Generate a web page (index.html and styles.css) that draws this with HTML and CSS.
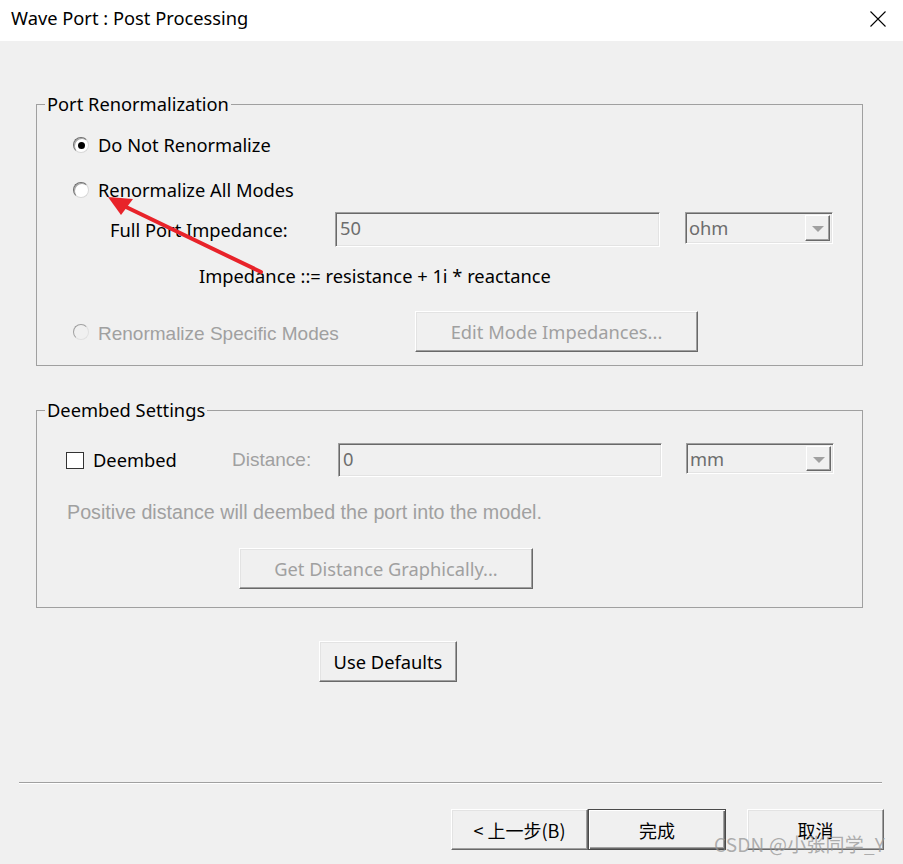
FILE: index.html
```html
<!DOCTYPE html>
<html>
<head>
<meta charset="utf-8">
<link rel="stylesheet" href="styles.css">
</head>
<body>
<div class="titlebar">
  <span class="title">Wave Port : Post Processing</span>
  <svg class="close" width="16" height="16" viewBox="0 0 16 16"><path d="M0.5 0.5 L15.5 15.5 M15.5 0.5 L0.5 15.5" stroke="#000" stroke-width="1.1" fill="none"/></svg>
</div>
<div class="content">
  <fieldset class="group g1">
    <legend>Port Renormalization</legend>
    <div class="row r1"><span class="radio checked"></span><span class="lbl">Do Not Renormalize</span></div>
    <div class="row r2"><span class="radio"></span><span class="lbl">Renormalize All Modes</span></div>
    <div class="row r3">
      <span class="fpi">Full Port Impedance:</span>
      <div class="input in50"><span class="val">50</span></div>
      <div class="select"><span class="val">ohm</span><span class="arrowbtn"><span class="tri"></span></span></div>
    </div>
    <div class="row r4"><span>Impedance ::= resistance + 1i * reactance</span></div>
    <div class="row r5">
      <span class="radio disabled"></span><span class="lbl dis specific">Renormalize Specific Modes</span>
      <div class="btn dis editbtn">Edit Mode Impedances...</div>
    </div>
  </fieldset>

  <fieldset class="group g2">
    <legend>Deembed Settings</legend>
    <div class="row d1">
      <div class="chkwrap"><span class="check"></span><span class="lbl">Deembed</span></div>
      <span class="dis distlbl">Distance:</span>
      <div class="input in0"><span class="val">0</span></div>
      <div class="select"><span class="val">mm</span><span class="arrowbtn"><span class="tri"></span></span></div>
    </div>
    <div class="row d2"><span class="dis">Positive distance will deembed the port into the model.</span></div>
    <div class="row d3"><div class="btn dis getbtn">Get Distance Graphically...</div></div>
  </fieldset>

  <div class="btn defaults">Use Defaults</div>

  <div class="separator"></div>

  <div class="footer">
    <div class="btn fbtn">&lt; 上一步(B)</div>
    <div class="btn fbtn default">完成</div>
    <div class="btn fbtn cancel">取消</div>
  </div>
</div>

<div class="watermark">CSDN @小张同学_Y</div>

<svg class="arrow" width="903" height="864" viewBox="0 0 903 864">
  <line x1="261" y1="272" x2="124" y2="206" stroke="#e8232a" stroke-width="4" stroke-linecap="round"/>
  <polygon points="108,197 133,199 121,215" fill="#e8232a"/>
</svg>
</body>
</html>
```

FILE: styles.css
```css
* { box-sizing: border-box; }

body {
  margin: 0;
  width: 903px;
  height: 864px;
  overflow: hidden;
  position: relative;
  background: #f0f0f0;
  font-family: "Noto Sans", "Noto Sans CJK SC", sans-serif;
  font-size: 18.3px;
  color: #000;
}

.titlebar {
  height: 41px;
  background: #fff;
  display: flex;
  align-items: center;
  justify-content: space-between;
  padding: 0 17px 0 11px;
}

.title { font-size: 18.3px; line-height: 24px; margin-top: -5px; }
.close { display: block; margin-top: -4px; }

.content { display: flex; flex-direction: column; align-items: flex-start; }

.group {
  margin: 0 0 0 36px;
  width: 827px;
  border: 1px solid #a0a0a0;
  padding: 0;
  min-width: 0;
}

.group legend {
  margin-left: 8px;
  padding: 0 2px;
  line-height: 24px;
  font-size: 18.3px;
}

.g1 { margin-top: 51px; padding-bottom: 13px; }
.g2 { margin-top: 32px; padding-bottom: 18px; }

.row { display: flex; align-items: center; }

.r1 { height: 30px; margin-top: 14px; padding-left: 36px; }
.r2 { height: 30px; margin-top: 15px; padding-left: 36px; }
.r3 { height: 35px; margin-top: 7px; padding-left: 73px; }
.r4 { height: 30px; margin-top: 13px; padding-left: 162px; }
.r5 { height: 41px; margin-top: 21px; padding-left: 36px; }

.radio {
  width: 16px;
  height: 16px;
  border-radius: 50%;
  background: #fff;
  border: 1px solid;
  border-color: #6e6e6e #d8d8d8 #d8d8d8 #6e6e6e;
  box-shadow: inset 1px 1px 0 #a8a8a8;
  margin-right: 9px;
  flex: none;
  display: flex;
  align-items: center;
  justify-content: center;
}

.radio.checked::after {
  content: "";
  width: 7px;
  height: 7px;
  border-radius: 50%;
  background: #000;
}

.radio.disabled {
  background: #f0f0f0;
  border-color: #a0a0a0 #e0e0e0 #e0e0e0 #a0a0a0;
  box-shadow: none;
}

.lbl { line-height: 24px; }

.dis { color: #a0a0a0; }

.specific,
.distlbl,
.d2 .dis {
  font-family: "Liberation Sans", Arial, sans-serif;
  font-size: 19px;
}

.d2 .dis { font-size: 19.7px; }

.specific { width: 317px; margin-top: 5px; }

.fpi { width: 225px; }

.input {
  height: 100%;
  background: #f0f0f0;
  border: 1px solid;
  border-color: #a0a0a0 #fff #fff #a0a0a0;
  box-shadow: inset 1px 1px 0 #696969, inset -1px -1px 0 #e3e3e3;
  color: #6d6d6d;
  padding: 1px 0 0 4px;
  display: flex;
  align-items: flex-start;
}

.input .val { line-height: 28px; }

.in50 { width: 325px; }
.in0 { width: 324px; }

.select {
  width: 148px;
  height: 31px;
  align-self: flex-start;
  margin-left: 25px;
  background: #f0f0f0;
  border: 1px solid;
  border-color: #a0a0a0 #fff #fff #a0a0a0;
  box-shadow: inset 1px 1px 0 #696969, inset -1px -1px 0 #e3e3e3;
  color: #6d6d6d;
  padding: 2px 2px 2px 3px;
  display: flex;
  align-items: center;
}

.select .val { flex: 1; line-height: 24px; }

.arrowbtn {
  width: 25px;
  height: 100%;
  background: #f0f0f0;
  border: 1px solid;
  border-color: #fff #696969 #696969 #fff;
  box-shadow: inset -1px -1px 0 #a0a0a0;
  display: flex;
  align-items: center;
  justify-content: center;
}

.tri {
  width: 0;
  height: 0;
  border-left: 6px solid transparent;
  border-right: 6px solid transparent;
  border-top: 6px solid #a0a0a0;
  margin-top: 2px;
}

.btn {
  height: 41px;
  background: #f0f0f0;
  border: 1px solid;
  border-color: #fff #696969 #696969 #fff;
  box-shadow: inset -1px -1px 0 #a0a0a0, inset 1px 1px 0 #e3e3e3;
  display: flex;
  align-items: center;
  justify-content: center;
  flex: none;
}

.editbtn { width: 283px; }

.d1 { height: 34px; margin-top: 21px; padding-left: 29px; }
.d2 { height: 30px; margin-top: 20px; padding-left: 30px; }
.d3 { height: 41px; margin-top: 21px; padding-left: 202px; }

.chkwrap { width: 166px; display: flex; align-items: center; }

.check {
  width: 18px;
  height: 17px;
  background: #fff;
  border: 1px solid #333;
  margin-right: 9px;
  flex: none;
}

.distlbl { width: 106px; }

.d1 .select { margin-left: 24px; height: 31px; }
.r3 .select { height: 32px; }

.getbtn { width: 294px; }

.defaults { width: 138px; margin: 33px 0 0 319px; }

.separator {
  width: 863px;
  margin: 100px 0 0 19px;
  height: 2px;
  border-top: 1px solid #a0a0a0;
  border-bottom: 1px solid #fff;
}

.footer {
  display: flex;
  margin: 25px 0 0 451px;
}

.fbtn { width: 137px; font-family: "Noto Sans CJK SC", sans-serif; font-size: 18px; }

.fbtn.default {
  width: 138px;
  border: 1px solid #4a4a4a;
  box-shadow: inset 1px 1px 0 #fff, inset -1px -1px 0 #696969, inset -2px -2px 0 #a0a0a0;
}

.fbtn.cancel { margin-left: 21px; }

.watermark {
  position: absolute;
  left: 714px;
  top: 831px;
  font-family: "Noto Sans CJK SC", sans-serif;
  font-size: 19px;
  line-height: 26px;
  color: rgba(150, 150, 150, 0.75);
  letter-spacing: 0.2px;
}

.arrow {
  position: absolute;
  left: 0;
  top: 0;
  pointer-events: none;
}
```
